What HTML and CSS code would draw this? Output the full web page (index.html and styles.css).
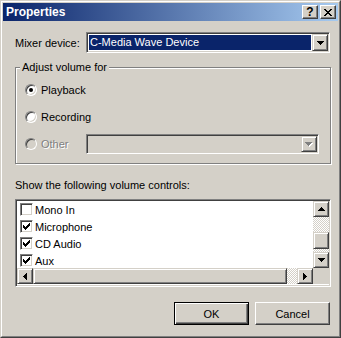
FILE: index.html
```html
<!DOCTYPE html>
<html lang="en">
<head>
    <meta charset="UTF-8">
    <title>Properties</title>
    <link rel="stylesheet" href="styles.css">
</head>
<body>
    <div class="window">
        <div class="frame">
            <div class="titlebar">
                <span class="title">Properties</span>
                <div class="title-buttons">
                    <span class="tbtn help">?</span>
                    <span class="tbtn close">
                        <svg width="8" height="7" viewBox="0 0 8 7"><path d="M0 0h2v1h-2z M6 0h2v1h-2z M1 1h2v1h-2z M5 1h2v1h-2z M2 2h4v1h-4z M3 3h2v1h-2z M2 4h4v1h-4z M1 5h2v1h-2z M5 5h2v1h-2z M0 6h2v1h-2z M6 6h2v1h-2z" fill="#000"/></svg>
                    </span>
                </div>
            </div>
            <div class="content">
                <div class="mixer-row">
                    <span class="mixer-label">Mixer device:</span>
                    <div class="combo sunken">
                        <div class="combo-value"><span class="selected">C-Media Wave Device</span></div>
                        <span class="drop-btn raised">
                            <svg width="7" height="4" viewBox="0 0 7 4"><path d="M0 0h7v1h-1v1h-1v1h-1v1h-1v-1h-1v-1h-1v-1h-1z" fill="#000"/></svg>
                        </span>
                    </div>
                </div>

                <div class="group">
                    <span class="group-title">Adjust volume for</span>
                    <div class="radio-row">
                        <span class="radio checked"></span><span>Playback</span>
                    </div>
                    <div class="radio-row">
                        <span class="radio"></span><span>Recording</span>
                    </div>
                    <div class="radio-row">
                        <span class="other-label">
                            <span class="radio disabled"></span><span class="disabled-text">Other</span>
                        </span>
                        <div class="combo other-combo sunken">
                            <div class="combo-value empty"></div>
                            <span class="drop-btn raised">
                                <svg width="8" height="5" viewBox="0 0 8 5"><path d="M1 1h7v1h-1v1h-1v1h-1v1h-1v-1h-1v-1h-1v-1h-1z" fill="#fff"/><path d="M0 0h7v1h-1v1h-1v1h-1v1h-1v-1h-1v-1h-1v-1h-1z" fill="#808080"/></svg>
                            </span>
                        </div>
                    </div>
                </div>

                <div class="list-caption">Show the following volume controls:</div>

                <div class="listbox sunken">
                    <div class="list-main">
                        <div class="list-items">
                            <div class="item"><span class="check"></span>Mono In</div>
                            <div class="item"><span class="check on"><svg width="7" height="7" viewBox="0 0 7 7"><path d="M6 0h1v1h-1z M5 1h2v1h-2z M0 2h1v1h-1z M4 2h3v1h-3z M0 3h2v1h-2z M3 3h3v1h-3z M0 4h5v1h-5z M1 5h3v1h-3z M2 6h1v1h-1z" fill="#000"/></svg></span>Microphone</div>
                            <div class="item"><span class="check on"><svg width="7" height="7" viewBox="0 0 7 7"><path d="M6 0h1v1h-1z M5 1h2v1h-2z M0 2h1v1h-1z M4 2h3v1h-3z M0 3h2v1h-2z M3 3h3v1h-3z M0 4h5v1h-5z M1 5h3v1h-3z M2 6h1v1h-1z" fill="#000"/></svg></span>CD Audio</div>
                            <div class="item"><span class="check on"><svg width="7" height="7" viewBox="0 0 7 7"><path d="M6 0h1v1h-1z M5 1h2v1h-2z M0 2h1v1h-1z M4 2h3v1h-3z M0 3h2v1h-2z M3 3h3v1h-3z M0 4h5v1h-5z M1 5h3v1h-3z M2 6h1v1h-1z" fill="#000"/></svg></span>Aux</div>
                        </div>
                        <div class="vscroll">
                            <span class="sbtn">
                                <svg width="7" height="4" viewBox="0 0 7 4"><path d="M3 0h1v1h1v1h1v1h1v1h-7v-1h1v-1h1v-1h1z" fill="#000"/></svg>
                            </span>
                            <span class="track track-top"></span>
                            <span class="sbtn vthumb"></span>
                            <span class="track track-fill"></span>
                            <span class="sbtn">
                                <svg width="7" height="4" viewBox="0 0 7 4"><path d="M0 0h7v1h-1v1h-1v1h-1v1h-1v-1h-1v-1h-1v-1h-1z" fill="#000"/></svg>
                            </span>
                        </div>
                    </div>
                    <div class="hscroll-row">
                        <div class="hscroll">
                            <span class="sbtn">
                                <svg width="4" height="7" viewBox="0 0 4 7"><path d="M3 0h1v7h-1v-1h-1v-1h-1v-1h-1v-1h1v-1h1v-1h1z" fill="#000"/></svg>
                            </span>
                            <span class="sbtn hthumb"></span>
                            <span class="track track-fill"></span>
                            <span class="sbtn">
                                <svg width="4" height="7" viewBox="0 0 4 7"><path d="M0 0h1v1h1v1h1v1h1v1h-1v1h-1v1h-1v1h-1z" fill="#000"/></svg>
                            </span>
                        </div>
                        <div class="corner"></div>
                    </div>
                </div>

                <div class="buttons">
                    <button class="btn default">OK</button>
                    <button class="btn">Cancel</button>
                </div>
            </div>
        </div>
    </div>
</body>
</html>
```

FILE: styles.css
```css
* {
    box-sizing: border-box;
}
body {
    margin: 0;
    padding: 0;
    font-family: "Liberation Sans", Arial, sans-serif;
    font-size: 11px;
    color: #000;
    background: #d4d0c8;
}
.window {
    width: 341px;
    height: 338px;
    background: #d4d0c8;
    border: 1px solid;
    border-color: #d4d0c8 #404040 #404040 #d4d0c8;
}
.frame {
    height: 100%;
    border: 1px solid;
    border-color: #fff #808080 #808080 #fff;
    padding: 1px;
}
.titlebar {
    height: 18px;
    display: flex;
    align-items: center;
    justify-content: space-between;
    padding: 0 2px 0 3px;
    background: linear-gradient(to right, #0a246a, #a6caf0);
}
.title {
    color: #fff;
    font-weight: bold;
    font-size: 12px;
}
.title-buttons {
    display: flex;
    gap: 2px;
}
.tbtn {
    width: 16px;
    height: 14px;
    display: flex;
    align-items: center;
    justify-content: center;
    background: #d4d0c8;
    border: 1px solid;
    border-color: #fff #404040 #404040 #fff;
    box-shadow: inset -1px -1px #808080;
}
.help {
    font-weight: bold;
    font-size: 12px;
    line-height: 12px;
}
.content {
    padding: 11px 7px 0 12px;
}
.mixer-row {
    display: flex;
    align-items: center;
}
.mixer-label {
    width: 71px;
}
.sunken {
    border: 1px solid;
    border-color: #808080 #fff #fff #808080;
    padding: 1px;
    box-shadow: inset 1px 1px #404040, inset -1px -1px #d4d0c8;
}
.raised {
    border: 1px solid;
    border-color: #d4d0c8 #404040 #404040 #d4d0c8;
    background: #d4d0c8;
    box-shadow: inset 1px 1px #fff, inset -1px -1px #808080;
}
.combo {
    width: 244px;
    height: 21px;
    display: flex;
    background: #fff;
}
.combo-value {
    flex: 1;
    padding: 1px;
}
.combo-value.empty {
    background: #d4d0c8;
}
.selected {
    display: block;
    height: 15px;
    line-height: 15px;
    padding-left: 1px;
    background: #0a246a;
    color: #fff;
}
.drop-btn {
    width: 16px;
    height: 17px;
    display: flex;
    align-items: center;
    justify-content: center;
}
.group {
    position: relative;
    margin-top: 14px;
    height: 97px;
    border: 1px solid #808080;
    box-shadow: inset 1px 1px #fff, 1px 1px #fff;
    padding: 12px 0 0 9px;
}
.group-title {
    position: absolute;
    top: -7px;
    left: 4px;
    padding: 0 2px;
    line-height: 13px;
    background: #d4d0c8;
}
.radio-row {
    height: 20px;
    display: flex;
    align-items: center;
    margin-bottom: 7px;
}
.radio {
    position: relative;
    width: 12px;
    height: 12px;
    margin-right: 4px;
    border-radius: 50%;
    border: 1px solid;
    border-color: #808080 #fff #fff #808080;
    box-shadow: inset 1px 1px #404040, inset -1px -1px #d4d0c8;
    background: #fff;
}
.radio.checked::after {
    content: "";
    position: absolute;
    left: 3px;
    top: 3px;
    width: 4px;
    height: 4px;
    border-radius: 50%;
    background: #000;
}
.radio.disabled {
    background: #d4d0c8;
}
.other-label {
    width: 61px;
    display: flex;
    align-items: center;
}
.disabled-text {
    color: #808080;
    text-shadow: 1px 1px #fff;
}
.other-combo {
    width: 233px;
    height: 20px;
    background: #d4d0c8;
}
.other-combo .drop-btn {
    height: 16px;
}
.list-caption {
    margin-top: 15px;
    line-height: 13px;
}
.listbox {
    margin-top: 7px;
    width: 316px;
    height: 88px;
    background: #fff;
}
.list-main {
    display: flex;
    height: 67px;
}
.list-items {
    flex: 1;
    background: #fff;
}
.item {
    height: 17px;
    display: flex;
    align-items: center;
    padding-left: 3px;
}
.check {
    width: 13px;
    height: 13px;
    margin-right: 2px;
    display: flex;
    align-items: center;
    justify-content: center;
    border: 1px solid;
    border-color: #808080 #fff #fff #808080;
    box-shadow: inset 1px 1px #404040, inset -1px -1px #d4d0c8;
    background: #fff;
}
.vscroll {
    width: 16px;
    display: flex;
    flex-direction: column;
}
.sbtn {
    flex: none;
    width: 16px;
    height: 16px;
    display: flex;
    align-items: center;
    justify-content: center;
    background: #d4d0c8;
    border: 1px solid;
    border-color: #d4d0c8 #404040 #404040 #d4d0c8;
    box-shadow: inset 1px 1px #fff, inset -1px -1px #808080;
}
.track {
    background-image: repeating-conic-gradient(#fff 0 25%, #d4d0c8 0 50%);
    background-size: 2px 2px;
}
.track-top {
    height: 15px;
}
.track-fill {
    flex: 1;
}
.vthumb {
    height: 17px;
}
.hscroll-row {
    display: flex;
    height: 16px;
}
.hscroll {
    flex: 1;
    display: flex;
}
.hthumb {
    width: 254px;
}
.corner {
    width: 16px;
    background: #d4d0c8;
}
.buttons {
    display: flex;
    justify-content: flex-end;
    gap: 6px;
    margin-top: 15px;
    margin-right: 1px;
}
.btn {
    width: 75px;
    height: 23px;
    padding: 0;
    font-family: "Liberation Sans", Arial, sans-serif;
    font-size: 11px;
    color: #000;
    background: #d4d0c8;
    border: 1px solid;
    border-color: #fff #404040 #404040 #fff;
    box-shadow: inset -1px -1px #808080;
}
.btn.default {
    border: 1px solid #000;
    box-shadow: inset 1px 1px #fff, inset -1px -1px #404040, inset -2px -2px #808080;
}
```
